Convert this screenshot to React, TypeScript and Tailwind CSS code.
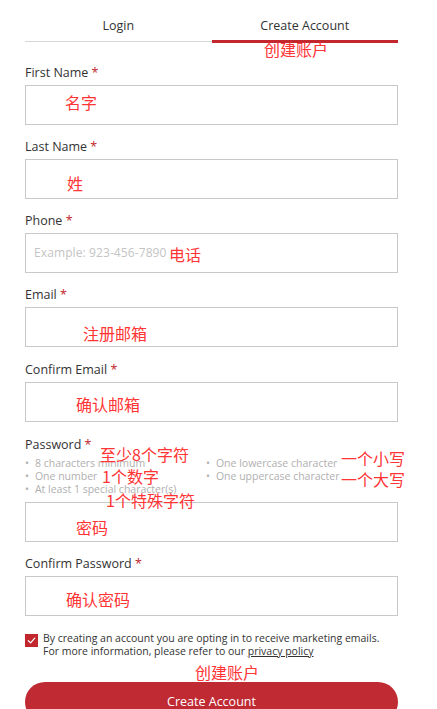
import React from 'react';

const font = { fontFamily: '"Open Sans", "Noto Sans CJK SC", sans-serif' };

function Note({ text, className }: { text: string; className: string }) {
  return (
    <span
      className={`absolute text-[16px] leading-none text-[#ff3434] whitespace-nowrap ${className}`}
      style={{ fontFamily: '"Noto Sans CJK SC", sans-serif' }}
    >
      {text}
    </span>
  );
}

function Field({ label, placeholder }: { label: string; placeholder?: string }) {
  return (
    <div className="flex flex-col">
      <label className="text-[12.5px] leading-4 text-[#333] mb-1">
        {label} <span className="text-[#c1272d]">*</span>
      </label>
      <div className="h-10 border border-[#c9c9c9] bg-white flex items-center px-2">
        {placeholder && <span className="text-[12px] text-[#c4c4c4] tracking-[0.1px]">{placeholder}</span>}
      </div>
    </div>
  );
}

export default function App() {
  return (
    <div className="relative w-[437px] h-[709px] overflow-hidden bg-white" style={font}>
      <div className="px-[25px] w-[423px] pt-[17px]">
        {/* tabs */}
        <div className="flex">
          <div className="flex-1 text-center text-[12.5px] text-[#333] pb-[5px] border-b border-[#d6d6d6]">Login</div>
          <div className="flex-1 text-center text-[12.5px] text-[#333] pb-[4px] border-b-[3px] border-[#c1272d] -mb-[1px]">
            Create Account
          </div>
        </div>

        <div className="flex flex-col gap-[14.2px] mt-[23px]">
          <Field label="First Name" />
          <Field label="Last Name" />
          <Field label="Phone" placeholder="Example: 923-456-7890" />
          <Field label="Email" />
          <Field label="Confirm Email" />

          <div className="flex flex-col">
            <label className="text-[12.5px] leading-4 text-[#333] mt-[1px]">
              Password <span className="text-[#c1272d]">*</span>
            </label>
            <div className="grid grid-cols-[181px_1fr] mt-[4px] mb-[6px] text-[10.5px] leading-[13px] text-[#b0b0b0]">
              <ul className="flex flex-col">
                <li className="flex gap-[6px]"><span>•</span>8 characters minimum</li>
                <li className="flex gap-[6px]"><span>•</span>One number</li>
                <li className="flex gap-[6px]"><span>•</span>At least 1 special character(s)</li>
              </ul>
              <ul className="flex flex-col">
                <li className="flex gap-[6px]"><span>•</span>One lowercase character</li>
                <li className="flex gap-[6px]"><span>•</span>One uppercase character</li>
              </ul>
            </div>
            <div className="h-10 border border-[#c9c9c9] bg-white" />
          </div>

          <Field label="Confirm Password" />

          <div className="flex gap-[5px] text-[10.5px] leading-[13px] text-[#333] mt-[2px]">
            <span className="mt-[1.5px] w-[13px] h-[13px] shrink-0 bg-[#c1272d] flex items-center justify-center">
              <svg width="9" height="9" viewBox="0 0 10 10" fill="none">
                <path d="M1.5 5.2 L4 7.6 L8.6 2.4" stroke="white" strokeWidth="1.4" strokeLinecap="round" strokeLinejoin="round" />
              </svg>
            </span>
            <p>
              By creating an account you are opting in to receive marketing emails.
              <br />
              For more information, please refer to our <span className="underline">privacy policy</span>
            </p>
          </div>
        </div>

        <button className="mt-[24px] w-full h-[40px] rounded-full bg-[#bf2a33] text-white text-[12.5px]">
          Create Account
        </button>
      </div>

      <Note text="创建账户" className="left-[264px] top-[41px]" />
      <Note text="名字" className="left-[65px] top-[94px]" />
      <Note text="姓" className="left-[67px] top-[175px]" />
      <Note text="电话" className="left-[169px] top-[246px]" />
      <Note text="注册邮箱" className="left-[83px] top-[325px] text-[16.5px]" />
      <Note text="确认邮箱" className="left-[76px] top-[396px]" />
      <Note text="至少8个字符" className="left-[100px] top-[446px]" />
      <Note text="一个小写" className="left-[341px] top-[450px]" />
      <Note text="1个数字" className="left-[102px] top-[468px]" />
      <Note text="一个大写" className="left-[341px] top-[471px]" />
      <Note text="1个特殊字符" className="left-[106px] top-[492px]" />
      <Note text="密码" className="left-[76px] top-[519px]" />
      <Note text="确认密码" className="left-[66px] top-[591px]" />
      <Note text="创建账户" className="left-[195px] top-[664px]" />
    </div>
  );
}
